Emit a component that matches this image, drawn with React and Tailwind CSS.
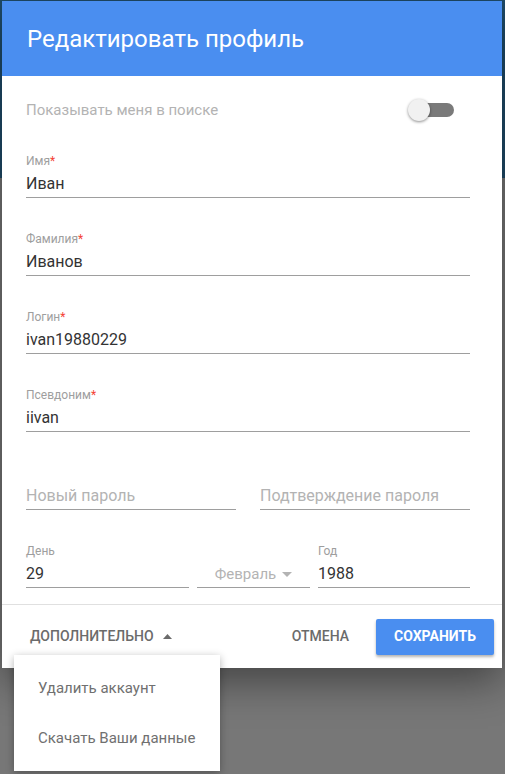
import { useState } from 'react'

const FONT = { fontFamily: 'Roboto, "Noto Sans", Arial, sans-serif' }

function Field({ label, value, required, placeholder, className = '' }) {
  return (
    <div className={'flex flex-col ' + className}>
      <div className="h-[14px] text-[12px] leading-[14px] text-[#9e9e9e]">
        {label}
        {required && <span className="text-[#f44336]">*</span>}
      </div>
      <div
        className={
          'mt-[6px] h-[20px] text-[16px] leading-[20px] ' +
          (value ? 'text-[#333333]' : 'text-[#b3b3b3] text-[15px]')
        }
      >
        {value || placeholder}
      </div>
      <div className="mt-[3px] h-px bg-[#9e9e9e]" />
    </div>
  )
}

export default function App() {
  const [visible, setVisible] = useState(false)

  return (
    <div className="relative h-[774px] w-[505px] overflow-hidden bg-[#777777]" style={FONT}>
      {/* dimmed page behind the dialog */}
      <div className="h-[178px] bg-[#1f4c6a]" />

      {/* dialog */}
      <div className="absolute left-[2px] top-[1px] w-[500px] bg-white shadow-[0_12px_40px_rgba(0,0,0,0.45)]">
        <div className="flex h-[75px] items-center bg-[#4a8ef0] px-[25px]">
          <h1 className="text-[24px] font-normal leading-none text-white">Редактировать профиль</h1>
        </div>

        <div className="pl-[24px] pr-[32px]">
          <div className="flex h-[68px] items-center justify-between">
            <span className="text-[15px] text-[#b3b3b3]">Показывать меня в поиске</span>
            <button
              onClick={() => setVisible(!visible)}
              className="relative mr-[16px] h-[20px] w-[46px]"
            >
              <span className="absolute right-0 top-[3px] h-[14px] w-[40px] rounded-full bg-[#7a7a7a]" />
              <span className="absolute left-0 top-[-1px] h-[22px] w-[22px] rounded-full bg-[#f1f1f1] shadow-[0_1px_3px_rgba(0,0,0,0.45)]" />
            </button>
          </div>

          <div className="flex flex-col gap-[34px] pt-[10px]">
            <Field label="Имя" value="Иван" required />
            <Field label="Фамилия" value="Иванов" required />
            <Field label="Логин" value="ivan19880229" required />
            <Field label="Псевдоним" value="iivan" required />
            <div className="flex gap-[24px]">
              <Field className="flex-1" placeholder="Новый пароль" />
              <Field className="flex-1" placeholder="Подтверждение пароля" />
            </div>
            <div className="flex gap-[8px]">
              <Field className="w-[163px]" label="День" value="29" />
              <div className="flex w-[113px] flex-col">
                <div className="h-[14px]" />
                <div className="mt-[6px] flex h-[20px] items-center justify-center gap-[6px] text-[15px] text-[#b3b3b3]">
                  Февраль
                  <svg width="10" height="5" viewBox="0 0 10 5">
                    <path d="M0 0 L10 0 L5 5 Z" fill="#b3b3b3" />
                  </svg>
                </div>
                <div className="mt-[3px] h-px bg-[#9e9e9e]" />
              </div>
              <Field className="flex-1" label="Год" value="1988" />
            </div>
          </div>
        </div>

        <div className="mt-[16px] h-px bg-[#e0e0e0]" />

        <div className="flex h-[63px] items-center pl-[28px] pr-[8px]">
          <button className="flex items-center gap-[9px] text-[14px] font-medium text-[#6b6b6b]">
            ДОПОЛНИТЕЛЬНО
            <svg width="9" height="5" viewBox="0 0 9 5">
              <path d="M0 5 L9 5 L4.5 0 Z" fill="#6b6b6b" />
            </svg>
          </button>
          <div className="flex-1" />
          <button className="mr-[27px] text-[14px] font-medium text-[#6b6b6b]">ОТМЕНА</button>
          <button className="flex h-[36px] w-[118px] items-center justify-center rounded-[2px] bg-[#4a8ef0] text-[14px] font-bold text-white shadow-[0_2px_3px_rgba(0,0,0,0.3)]">
            СОХРАНИТЬ
          </button>
        </div>
      </div>

      {/* dropdown menu */}
      <div className="absolute left-[14px] top-[655px] flex w-[206px] flex-col bg-white py-[8px] shadow-[0_2px_8px_rgba(0,0,0,0.3)]">
        <div className="flex h-[50px] items-center whitespace-nowrap px-[24px] text-[15px] text-[#707070]">
          Удалить аккаунт
        </div>
        <div className="flex h-[50px] items-center whitespace-nowrap px-[24px] text-[15px] text-[#707070]">
          Скачать Ваши данные
        </div>
      </div>
    </div>
  )
}
